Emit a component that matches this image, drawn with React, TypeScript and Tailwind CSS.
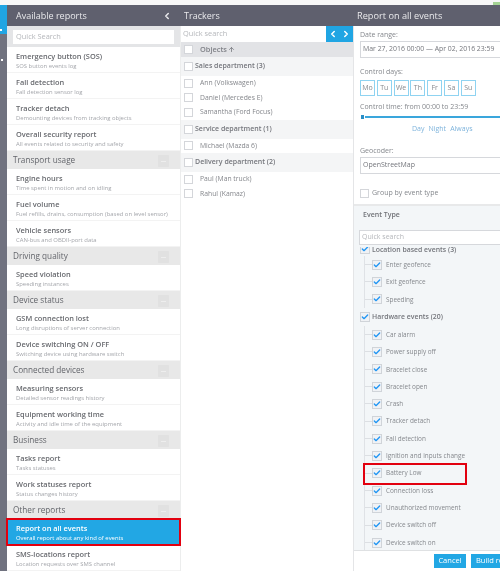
import { Check, ChevronLeft, ChevronRight, ArrowUp } from "lucide-react"

const reportGroups = [
  {
    title: "",
    items: [
      ["Emergency button (SOS)", "SOS button events log"],
      ["Fall detection", "Fall detection sensor log"],
      ["Tracker detach", "Demounting devices from tracking objects"],
      ["Overall security report", "All events related to security and safety"],
    ],
  },
  {
    title: "Transport usage",
    items: [
      ["Engine hours", "Time spent in motion and on idling"],
      ["Fuel volume", "Fuel refills, drains, consumption (based on level sensor)"],
      ["Vehicle sensors", "CAN-bus and OBDII-port data"],
    ],
  },
  { title: "Driving quality", items: [["Speed violation", "Speeding instances"]] },
  {
    title: "Device status",
    items: [
      ["GSM connection lost", "Long disruptions of server connection"],
      ["Device switching ON / OFF", "Switching device using hardware switch"],
    ],
  },
  {
    title: "Connected devices",
    items: [
      ["Measuring sensors", "Detailed sensor readings history"],
      ["Equipment working time", "Activity and idle time of the equipment"],
    ],
  },
  {
    title: "Business",
    items: [
      ["Tasks report", "Tasks statuses"],
      ["Work statuses report", "Status changes history"],
    ],
  },
  {
    title: "Other reports",
    items: [
      ["Report on all events", "Overall report about any kind of events"],
      ["SMS-locations report", "Location requests over SMS channel"],
    ],
  },
]

const trackers = [
  { group: "Sales department (3)", people: ["Ann (Volkswagen)", "Daniel (Mercedes E)", "Samantha (Ford Focus)"] },
  { group: "Service department (1)", people: ["Michael (Mazda 6)"] },
  { group: "Delivery department (2)", people: ["Paul (Man truck)", "Rahul (Kamaz)"] },
]

const days = ["Mo", "Tu", "We", "Th", "Fr", "Sa", "Su"]

const locationEvents = ["Enter geofence", "Exit geofence", "Speeding"]
const hardwareEvents = [
  "Car alarm",
  "Power supply off",
  "Bracelet close",
  "Bracelet open",
  "Crash",
  "Tracker detach",
  "Fall detection",
  "Ignition and inputs change",
  "Battery Low",
  "Connection loss",
  "Unauthorized movement",
  "Device switch off",
  "Device switch on",
]

function Box() {
  return <span className="block w-[9px] h-[9px] shrink-0 bg-white border border-[#d4d6da]" />
}

function CheckBox() {
  return (
    <span className="flex items-center justify-center w-[10px] h-[10px] shrink-0 bg-[#f0f2f5] border border-[#d0d4d9]">
      <Check size={8} strokeWidth={4} className="text-[#2196f3]" />
    </span>
  )
}

function EventRow({ label }: { label: string }) {
  const marked = label === "Battery Low"
  return (
    <div className="relative flex items-center h-[17.33px]">
      <span className="w-[7px] h-px shrink-0 bg-[#dcdfe3]" />
      <CheckBox />
      <span className="ml-[4px] text-[6.4px] text-[#85888d] whitespace-nowrap">{label}</span>
      {marked && <span className="absolute left-[-2px] top-[-2px] w-[104px] h-[22px] border-2 border-[#e2000f]" />}
    </div>
  )
}

export default function App() {
  return (
    <div className="w-[500px] h-[580px] bg-white overflow-hidden flex flex-col font-['Open_Sans',sans-serif] blur-[0.5px]">
      <div className="h-[5px] bg-[#f7f7f7] flex justify-end items-start">
        <span className="w-[7px] h-[3px] mt-[2px] bg-[#a4d394]" />
      </div>
      <div className="flex h-[566px]">
        <div className="w-[7px] shrink-0 flex flex-col bg-[#70727f]">
          <div className="h-[29px] bg-[#20a5e3] flex items-end pb-[3px]">
            <span className="w-[2px] h-[2px] bg-white" />
          </div>
          <span className="w-[2px] h-[2px] mt-[25px] ml-[1px] bg-white" />
        </div>

        <div className="w-[173px] shrink-0 flex flex-col">
          <div className="h-[21px] bg-[#5f606e] flex items-center justify-between pl-[9px] pr-[8px] text-[#e9e9ec] text-[9px]">
            <span>Available reports</span>
            <ChevronLeft size={10} strokeWidth={3.5} />
          </div>
          <div className="h-[21px] bg-[#e4e5e7] px-[6px] flex items-center">
            <div className="w-full h-[14px] bg-white pl-[3px] flex items-center text-[7.4px] text-[#b5b7bb]">Quick Search</div>
          </div>
          {reportGroups.map((group) => (
            <div key={group.title}>
              {group.title && (
                <div className="relative h-[18px] bg-[#e8e8e8] pl-[6px] flex items-center text-[8.2px] text-[#63656b]">
                  {group.title}
                  <span className="absolute right-[11px] top-[4px] w-[11px] h-[12px] rounded-[1px] bg-[#e1e1e1] flex items-center justify-center">
                    <span className="w-[5px] h-px bg-[#eeeeee]" />
                  </span>
                </div>
              )}
              {group.items.map(([name, sub]) => {
                const active = name === "Report on all events"
                return (
                  <div
                    key={name}
                    className={
                      active
                        ? "h-[26px] pl-[9px] pt-[4px] flex flex-col bg-[#22a7e4] outline-2 -outline-offset-1 outline-[#e2000f] relative"
                        : "h-[26px] pl-[9px] pt-[4px] flex flex-col bg-white border-b border-[#f3f3f3]"
                    }
                  >
                    <span className={active ? "text-[7.4px] leading-[10px] font-semibold text-white" : "text-[7.4px] leading-[10px] font-semibold text-[#67696e]"}>
                      {name}
                    </span>
                    <span className={active ? "text-[5.9px] leading-[10px] text-white whitespace-nowrap" : "text-[5.9px] leading-[10px] text-[#a4a6ab] whitespace-nowrap"}>
                      {sub}
                    </span>
                  </div>
                )
              })}
            </div>
          ))}
        </div>

        <div className="w-[173px] shrink-0 flex flex-col border-l border-[#eceded]">
          <div className="h-[21px] -ml-px bg-[#5f606e] pl-[4px] flex items-center text-[#e9e9ec] text-[9px]">Trackers</div>
          <div className="h-[16px] flex">
            <div className="flex-1 pl-[2px] flex items-center text-[7.4px] text-[#b5b7bb]">Quick search</div>
            <div className="w-[27px] bg-[#20a5e3] text-white flex items-center justify-center gap-[3px]">
              <ChevronLeft size={10} strokeWidth={3.5} />
              <ChevronRight size={10} strokeWidth={3.5} />
            </div>
          </div>
          <div className="h-[15px] bg-[#e2e3e6] pl-[3px] flex items-center gap-[7px] text-[7.4px] font-semibold text-[#808288]">
            <Box />
            <span className="flex items-center">
              Objects
              <ArrowUp size={7} strokeWidth={3} className="ml-[1px]" />
            </span>
          </div>
          {trackers.map((t) => (
            <div key={t.group}>
              <div className="h-[19px] bg-[#f4f5f6] pl-[3px] flex items-center gap-[2px] text-[7px] font-semibold text-[#74767c]">
                <Box />
                {t.group}
              </div>
              {t.people.map((p) => (
                <div key={p} className="h-[14.5px] pl-[3px] flex items-center gap-[7px] text-[6.8px] text-[#85878c]">
                  <Box />
                  {p}
                </div>
              ))}
            </div>
          ))}
        </div>

        <div className="w-[147px] shrink-0 flex flex-col border-l border-[#e4e5e7]">
          <div className="h-[21px] -ml-px bg-[#5f606e] pl-[4px] flex items-center text-[#e9e9ec] text-[9.2px] whitespace-nowrap">Report on all events</div>
          <div className="h-[178px] pl-[6px] pt-[4px] text-[7px] text-[#85888d]">
            <div className="leading-[9px]">Date range:</div>
            <div className="mt-[2px] w-[160px] h-[17px] border border-[#d6d8dc] pl-[2px] flex items-center text-[6.9px] text-[#74767c] whitespace-nowrap">
              Mar 27, 2016 00:00 — Apr 02, 2016 23:59
            </div>
            <div className="mt-[9px] leading-[9px]">Control days:</div>
            <div className="mt-[4px] flex gap-[1.8px]">
              {days.map((d) => (
                <span key={d} className="w-[15px] h-[16px] border border-[#8fd3f1] flex items-center justify-center">
                  {d}
                </span>
              ))}
            </div>
            <div className="mt-[6px] leading-[9px] whitespace-nowrap">Control time: from 00:00 to 23:59</div>
            <div className="relative mt-[5px] h-[2px] -mr-[10px] bg-[#3aa6dc]">
              <span className="absolute left-0 -top-[2px] w-[5px] h-[6px] bg-[#2a8fc7] border border-white" />
            </div>
            <div className="mt-[6px] pl-[52px] flex gap-[4px] text-[#7fb4dc] leading-[9px]">
              <span>Day</span>
              <span>Night</span>
              <span>Always</span>
            </div>
            <div className="mt-[13px] leading-[9px]">Geocoder:</div>
            <div className="mt-[2px] w-[160px] h-[17px] border border-[#d6d8dc] pl-[2px] flex items-center text-[#74767c]">OpenStreetMap</div>
            <div className="mt-[14px] flex items-center gap-[3px]">
              <Box />
              Group by event type
            </div>
          </div>
          <div className="h-[2px] bg-[#e8e9ea]" />
          <div className="flex-1 min-h-0 bg-[#f3f6f8] overflow-hidden flex flex-col">
            <div className="h-[24px] shrink-0 pl-[9px] pt-[4px] text-[7px] font-semibold text-[#707277]">Event Type</div>
            <div className="shrink-0 ml-[5px] h-[15px] w-[160px] bg-white border border-[#d6d8dc] pl-[2px] flex items-center text-[7px] text-[#b5b7bb]">Quick search</div>
            <div className="flex-1 min-h-0 mt-[2px] overflow-hidden pl-[6px]">
              {/* first group is scrolled partly under the search box */}
              <div className="h-[7px] mb-[2px] overflow-hidden flex items-end gap-[2px] text-[6.9px] leading-[9px] font-semibold text-[#74767c]">
                <CheckBox />
                <span className="whitespace-nowrap">Location based events (3)</span>
              </div>
              <div className="ml-[4px] border-l border-[#dfe2e6]">
                {locationEvents.map((e) => (
                  <EventRow key={e} label={e} />
                ))}
              </div>
              <div className="h-[18px] flex items-center gap-[2px] text-[6.9px] font-semibold text-[#74767c]">
                <CheckBox />
                Hardware events (20)
              </div>
              <div className="ml-[4px] border-l border-[#dfe2e6]">
                {hardwareEvents.map((e) => (
                  <EventRow key={e} label={e} />
                ))}
              </div>
            </div>
            <div className="h-[21px] shrink-0 bg-white border-t border-[#dfe1e3] pl-[80px] pt-[3px] flex gap-[5px] text-[7.5px] text-white">
              <span className="w-[32px] h-[14px] shrink-0 bg-[#22a7e4] flex items-center justify-center">Cancel</span>
              <span className="w-[50px] h-[14px] shrink-0 bg-[#22a7e4] pl-[5px] flex items-center whitespace-nowrap">Build report</span>
            </div>
          </div>
        </div>
      </div>
    </div>
  )
}
